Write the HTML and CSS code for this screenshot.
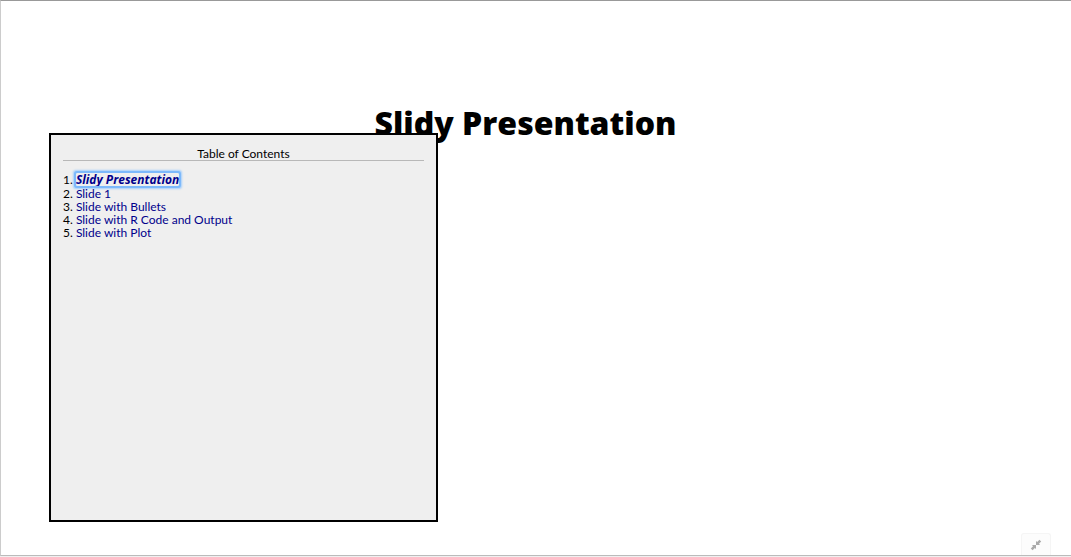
FILE: index.html
```html
<!DOCTYPE html>
<html lang="en">
<head>
<meta charset="utf-8">
<title>Slidy Presentation</title>
<link rel="stylesheet" href="styles.css">
</head>
<body>
<div class="viewer">
  <main class="slide">
    <h1 class="title">Slidy Presentation</h1>
  </main>
  <nav class="toc" aria-labelledby="toc-heading">
    <h2 class="toc-heading" id="toc-heading">Table of Contents</h2>
    <ol class="toc-list">
      <li><a class="current" href="#slide-1">Slidy Presentation</a></li>
      <li><a href="#slide-2">Slide 1</a></li>
      <li><a href="#slide-3">Slide with Bullets</a></li>
      <li><a href="#slide-4">Slide with R Code and Output</a></li>
      <li><a href="#slide-5">Slide with Plot</a></li>
    </ol>
  </nav>
  <button class="shrink" type="button" aria-label="Exit full screen">
    <svg width="12" height="12" viewBox="0 0 12 12" aria-hidden="true">
      <path d="M6 6V2L7.2 3 9.4 0.8 11.2 2.6 9 4.8 10 6ZM6 6V10L4.8 9 2.6 11.2 0.8 9.4 3 7.2 2 6Z"/>
    </svg>
  </button>
</div>
</body>
</html>
```

FILE: styles.css
```css
* {
  box-sizing: border-box;
}

body {
  margin: 0;
  background: #f0f0f0;
  color: #000;
  font-family: "Gill Sans", Lato, sans-serif;
}

.viewer {
  position: relative;
  height: calc(100vh - 1px);
  border: 1px solid #bbb;
  border-top-color: #999;
  border-left-color: #ccc;
  border-right: 0;
  background: #fff;
}

.slide {
  padding: 101px 21px 0 0;
}

.title {
  margin: 0;
  font-family: "Gill Sans", "Open Sans", sans-serif;
  font-size: 32px;
  font-weight: 800;
  line-height: 42px;
  text-align: center;
}

.toc {
  position: absolute;
  top: 132px;
  left: 48px;
  width: 389px;
  height: 389px;
  padding: 12px;
  border: 2px solid #000;
  background: #efefef;
  font-size: 12px;
  font-variant-ligatures: none;
}

.toc-heading {
  margin: 0 0 12px;
  border-bottom: 1px solid #b8b8b8;
  font-size: 12px;
  font-weight: 400;
  line-height: 13px;
  text-align: center;
}

.toc-list {
  margin: 0;
  padding: 0;
  list-style: none;
  counter-reset: slide;
  line-height: 13px;
}

.toc-list li {
  counter-increment: slide;
}

.toc-list li:first-child {
  margin-bottom: 1px;
}

.toc-list li::before {
  content: counter(slide) ". ";
}

.toc-list a {
  color: #00008b;
  text-decoration: none;
}

.toc-list .current {
  display: inline-block;
  border-radius: 1px;
  outline: 2px solid #7db9fb;
  box-shadow: 0 0 2px 3px #a5cffb;
  font-family: "Gill Sans", "Open Sans", sans-serif;
  font-size: 12px;
  font-style: italic;
  font-weight: 700;
}

.shrink {
  position: absolute;
  right: 20px;
  bottom: 0;
  display: flex;
  align-items: center;
  justify-content: center;
  width: 30px;
  height: 22px;
  padding: 0;
  border: 1px solid #f5f5f5;
  border-bottom: 0;
  border-radius: 3px 3px 0 0;
  background: #fcfcfc;
}

.shrink svg {
  fill: #aaa;
}
```
